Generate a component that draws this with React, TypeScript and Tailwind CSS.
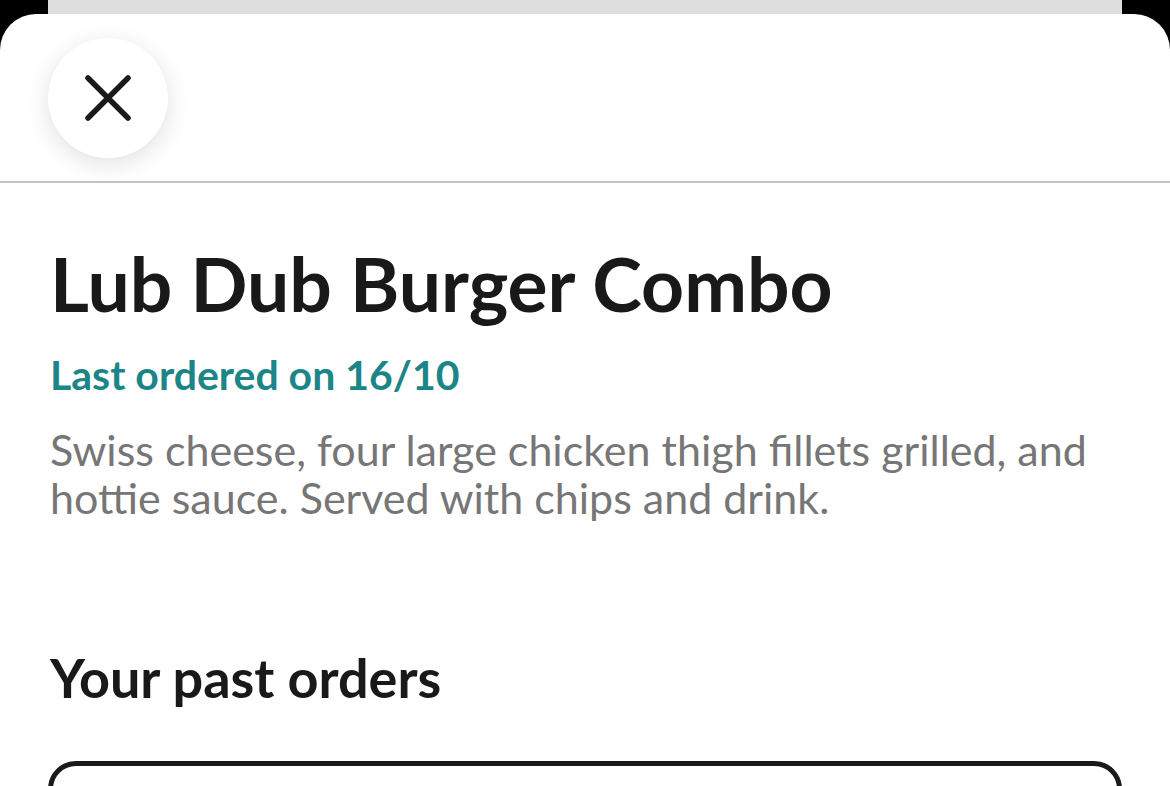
export default function App() {
  return (
    <div className="w-[1170px] h-[786px] overflow-hidden bg-black flex flex-col" style={{ fontFamily: 'Lato, "Open Sans", sans-serif' }}>
      {/* Sheet peeking behind */}
      <div className="h-[14px] mx-[48px] shrink-0 bg-[#dedede]" />

      {/* Modal sheet */}
      <div className="flex-1 bg-white rounded-t-[36px] flex flex-col">
        <div className="h-[169px] shrink-0 flex items-start px-[48px] pt-[24px] border-b-2 border-[#c4c4c4]">
          <button className="w-[120px] h-[120px] rounded-full bg-white flex items-center justify-center shadow-[0_6px_24px_rgba(0,0,0,0.12)]">
            <svg width="60" height="60" viewBox="0 0 60 60" fill="none" stroke="#1a1a1a" strokeWidth="5.5" strokeLinecap="round">
              <path d="M10 10 L50 50 M50 10 L10 50" />
            </svg>
          </button>
        </div>

        <div className="px-[50px] pt-[58px]">
          <h1 className="text-[75px] leading-[84px] font-bold text-[#191919]">Lub Dub Burger Combo</h1>
          <p className="mt-[26px] text-[41px] leading-[48px] font-bold text-[#1b8587]">Last ordered on 16/10</p>
          <p className="mt-[27px] text-[43px] leading-[48px] text-[#767676] max-w-[1060px]">
            Swiss cheese, four large chicken thigh fillets grilled, and hottie sauce. Served with chips and drink.
          </p>

          <h2 className="mt-[126px] text-[54px] leading-[60px] font-bold text-[#191919]">Your past orders</h2>
        </div>

        <div className="mx-[48px] mt-[53px] h-[200px] shrink-0 border-[5px] border-[#1a1a1a] rounded-[28px]" />
      </div>
    </div>
  );
}
